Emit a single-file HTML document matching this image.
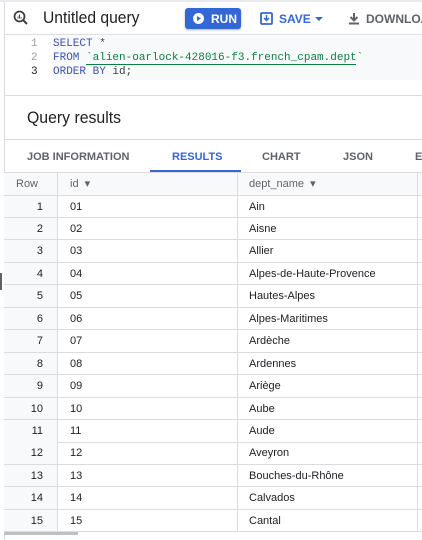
<!DOCTYPE html>
<html><head><meta charset="utf-8"><style>
*{margin:0;padding:0;box-sizing:border-box}
body{width:422px;height:540px;overflow:hidden;background:#fff;font-family:"Liberation Sans",Arial,sans-serif;position:relative;color:#202124}
.a{position:absolute}
.mono{font-family:"Liberation Mono",monospace;font-size:11px}
.tab{position:absolute;top:151px;font-size:11px;color:#5f6368;font-weight:bold;white-space:nowrap}
.row{position:absolute;left:4px;width:418px;height:22.5px;border-bottom:1px solid #dadce0;font-size:11px}
.row div{position:absolute;top:0;height:100%;line-height:23px}
.c0{left:0;width:54px;background:#f8f9fa;text-align:right;padding-right:14px;border-right:1px solid #dadce0}
.c1{left:54px;width:180px;padding-left:12px;border-right:1px solid #dadce0}
.c2{left:234px;width:180px;padding-left:11px;border-right:1px solid #dadce0}
</style></head><body>
<div class="a" style="left:0;top:0;width:422px;height:2px;background:#e8eaed"></div>
<div class="a" style="left:4px;top:2px;width:1px;height:538px;background:#dadce0"></div>
<div class="a" style="left:0;top:273px;width:2px;height:17px;background:#5f6368"></div>
<svg class="a" style="left:13px;top:10px" width="15" height="15" viewBox="0 0 15 15"><circle cx="6.5" cy="6.5" r="5" fill="none" stroke="#3c4043" stroke-width="1.8"/><path d="M10 10l4 4" stroke="#3c4043" stroke-width="2"/><path d="M5 8.5v-2M6.5 8.5v-4M8 8.5v-1.5" stroke="#3c4043" stroke-width="1"/></svg>
<div class="a" style="left:43px;top:8px;font-size:17px;color:#202124;transform:scaleX(0.92);transform-origin:left">Untitled query</div>
<div class="a" style="left:185px;top:8px;width:56px;height:21px;background:#3367d6;border-radius:3px;box-shadow:0 1px 2px rgba(0,0,0,.3)"></div>
<svg class="a" style="left:193px;top:13px" width="11" height="11"><circle cx="5.5" cy="5.5" r="5.5" fill="#fff"/><path d="M4 3l4 2.5-4 2.5z" fill="#3367d6"/></svg>
<div class="a" style="left:211px;top:12px;font-size:12px;font-weight:bold;color:#fff">RUN</div>
<svg class="a" style="left:260px;top:12px" width="13" height="13"><rect x="1" y="1" width="11" height="11" rx="1" fill="none" stroke="#3367d6" stroke-width="1.8"/><path d="M6.5 3v5M4 6l2.5 2.5L9 6" stroke="#3367d6" stroke-width="1.5" fill="none"/></svg>
<div class="a" style="left:279px;top:12px;font-size:12px;font-weight:bold;color:#3367d6">SAVE</div>
<div class="a" style="left:315px;top:17px;border:4px solid transparent;border-top:4px solid #3367d6"></div>
<svg class="a" style="left:348px;top:12px" width="12" height="13"><path d="M6 1v7M2.5 5L6 8.5 9.5 5" stroke="#5f6368" stroke-width="2" fill="none"/><rect x="1" y="10.5" width="10" height="2" fill="#5f6368"/></svg>
<div class="a" style="left:366px;top:12px;font-size:12px;font-weight:bold;color:#5f6368;white-space:nowrap">DOWNLOAD</div>
<div class="a" style="left:4px;top:34px;width:418px;height:1px;background:#dadce0"></div>
<div class="a" style="left:53px;top:36px;width:369px;height:44px;background:#f8f9fa"></div>
<div class="a mono" style="left:31px;top:37px;color:#9aa0a6;line-height:14px">1<br>2<br><span style="color:#202124">3</span></div>
<div class="a mono" style="left:53px;top:37px;line-height:14px;white-space:pre;color:#3c4043"><span style="color:#3f51b5">SELECT</span> *
<span style="color:#3f51b5">FROM</span> <span style="color:#0b8043">`alien-oarlock-428016-f3.french_cpam.dept`</span>
<span style="color:#3f51b5">ORDER BY</span> id;</div>
<div class="a" style="left:86px;top:64px;width:270px;height:1px;background:#0b8043"></div>
<div class="a" style="left:4px;top:95px;width:418px;height:1px;background:#dadce0"></div>
<div class="a" style="left:27px;top:108px;font-size:17px;transform:scaleX(0.93);transform-origin:left">Query results</div>
<div class="a" style="left:4px;top:139px;width:418px;height:1px;background:#dadce0"></div>
<div class="tab" style="left:27px">JOB INFORMATION</div>
<div class="tab" style="left:172px;color:#3367d6">RESULTS</div>
<div class="tab" style="left:262px">CHART</div>
<div class="tab" style="left:343px">JSON</div>
<div class="tab" style="left:415px">E</div>
<div class="a" style="left:150px;top:170px;width:91px;height:2px;background:#3367d6"></div>
<div class="a" style="left:4px;top:172px;width:418px;height:1px;background:#dadce0"></div>
<div class="row" style="top:173px;background:#f8f9fa;color:#5f6368"><div class="c0" style="text-align:left;padding-left:12px">Row</div><div class="c1">id &nbsp;▾</div><div class="c2">dept_name &nbsp;▾</div></div>
<div id="rows"></div>
<div class="a" style="left:4px;top:532px;width:74px;height:3px;background:#bdc1c6"></div>
<script>
var n=["Ain","Aisne","Allier","Alpes-de-Haute-Provence","Hautes-Alpes","Alpes-Maritimes","Ardèche","Ardennes","Ariège","Aube","Aude","Aveyron","Bouches-du-Rhône","Calvados","Cantal"],h="";
for(var i=0;i<15;i++){var id=(i<9?"0":"")+(i+1);h+='<div class="row" style="top:'+(195.5+i*22.45)+'px"><div class="c0">'+(i+1)+'</div><div class="c1">'+id+'</div><div class="c2">'+n[i]+'</div></div>';}
document.getElementById("rows").innerHTML=h;
</script>
</body></html>
